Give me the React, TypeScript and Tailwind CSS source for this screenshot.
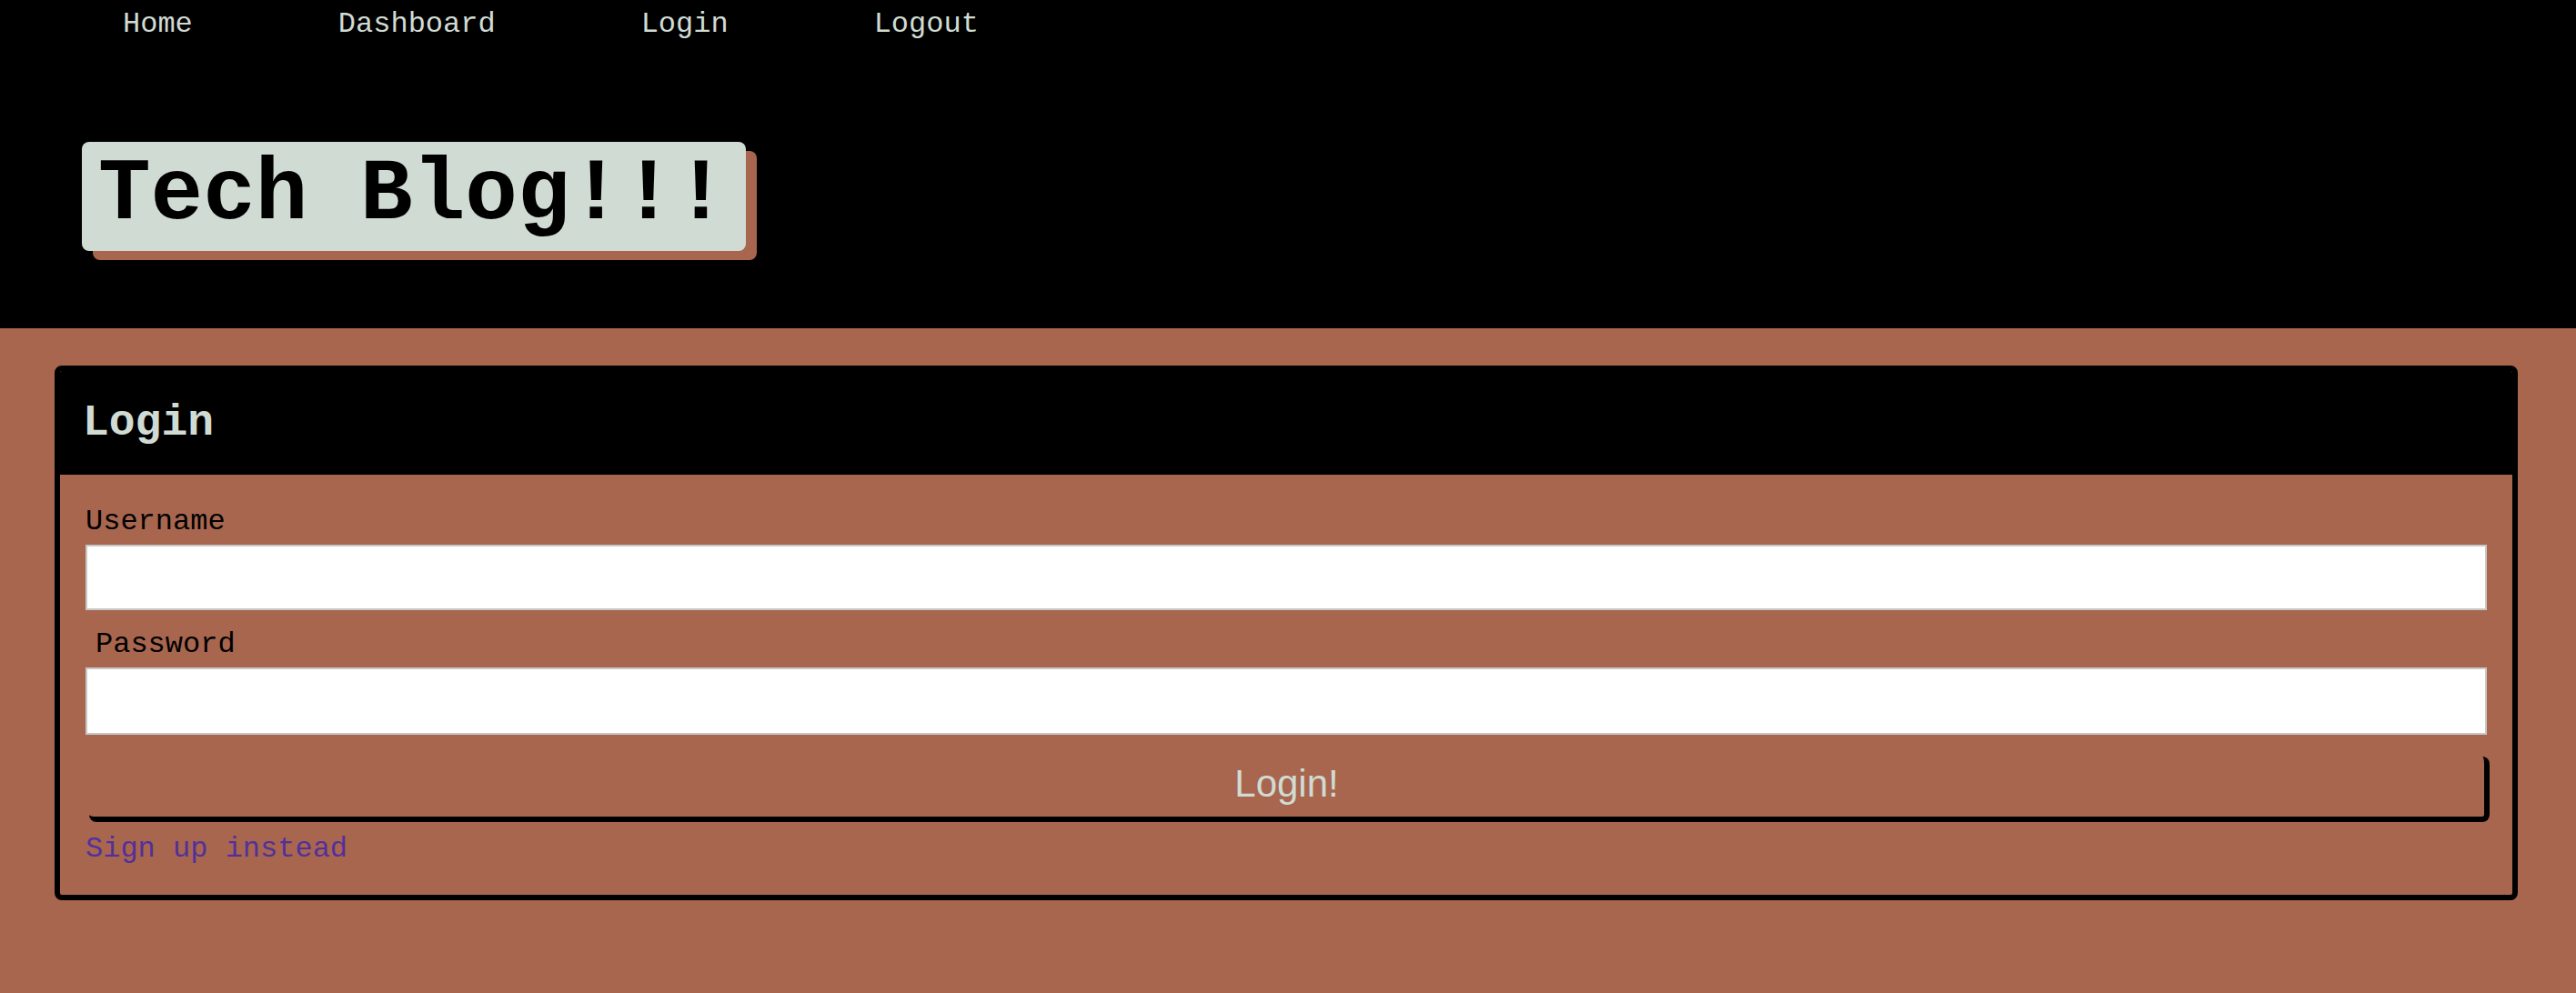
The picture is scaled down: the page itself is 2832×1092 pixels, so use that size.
const mono = "font-['Liberation_Mono','Courier_New',monospace]";

function NavBar() {
  const links = ["Home", "Dashboard", "Login", "Logout"];
  return (
    <nav className="flex gap-[160px] pl-[135px] pt-[9px]">
      {links.map((l) => (
        <a key={l} href="#" className="text-[32px] leading-[36px] text-[#d0dbd3]">
          {l}
        </a>
      ))}
    </nav>
  );
}

function LoginCard() {
  return (
    <div className="border-[6px] border-black rounded-lg overflow-hidden">
      <div className="bg-black px-[25px] pt-[30px] pb-[30px]">
        <h2 className="text-[48px] leading-[54px] font-bold text-[#d0dbd3]">Login</h2>
      </div>
      <form className="flex flex-col px-[28px] pt-[34px] pb-[32px]">
        <label className="text-[32px] leading-[36px] text-black">Username</label>
        <input className="mt-[7px] h-[72px] bg-white border-2 border-[#c8c8c8] outline-none" />
        <label className="mt-[20px] ml-[11px] text-[32px] leading-[36px] text-black">Password</label>
        <input type="password" className="mt-[7px] h-[74px] bg-white border-2 border-[#c8c8c8] outline-none" />
        <button
          type="button"
          className="mt-[24px] ml-[4px] mr-[-3px] pt-[6px] pb-[12px] border-r-[6px] border-b-[6px] border-black rounded-lg font-['Liberation_Sans',Arial,sans-serif] text-[42px] leading-[48px] text-[#d0dbd3]"
        >
          Login!
        </button>
        <a href="#" className="mt-[12px] text-[32px] leading-[36px] text-[#52309a] self-start">
          Sign up instead
        </a>
      </form>
    </div>
  );
}

export default function App() {
  return (
    <div className={`${mono} min-h-screen bg-[#a8664f]`}>
      <header className="bg-black pb-[85px]">
        <NavBar />
        <div className="mt-[111px] ml-[90px] inline-block bg-[#d0dbd3] rounded-lg pl-[18px] pr-[21px] pt-[4px] pb-[7px] shadow-[12px_10px_0_#a8664f]">
          <h1 className="text-[96px] leading-[109px] font-bold text-black">Tech Blog!!!</h1>
        </div>
      </header>
      <main className="pt-[41px] pl-[60px] pr-[64px] pb-[100px]">
        <LoginCard />
      </main>
    </div>
  );
}
